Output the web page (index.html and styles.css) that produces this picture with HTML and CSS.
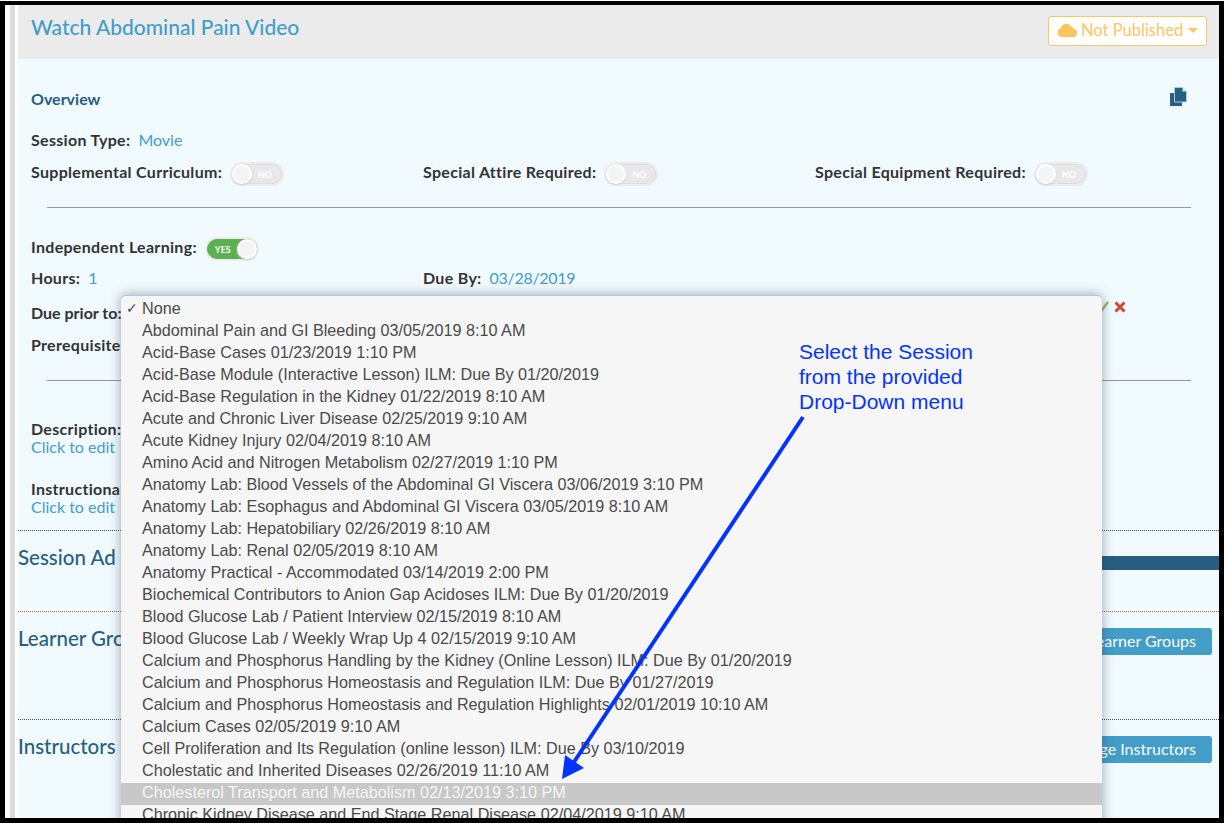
FILE: index.html
```html
<!DOCTYPE html>
<html>

<head>
	<title>Watch Abdominal Pain Video</title>
	<link rel="stylesheet" href="styles.css">
</head>

<body>
	<div class="frame">
		<div class="rail"></div>
		<div class="main">
			<div class="header">
				<h1 class="title">Watch Abdominal Pain Video</h1>
				<button class="publish">
					<svg class="cloud" viewBox="0 0 20 14" width="20" height="14"><path d="M5 14a4.6 4.6 0 0 1-1.2-9 5.6 5.6 0 0 1 10.4-1.2A3 3 0 0 1 16.6 6 4 4 0 0 1 16 14z" /></svg>
					<span>Not Published</span>
					<span class="caret"></span>
				</button>
			</div>
			<div class="panel">
				<div class="row overview">
					<span>Overview</span>
					<svg class="copy" viewBox="0 0 17 19" width="17" height="19">
						<path class="sheet-back" d="M0 6h5v9h7v4H0z" />
						<path class="sheet-front" d="M4.5 0.5h8l4 4v10.500h-12z" />
						<path class="sheet-fold" d="M12.500 0.500l4 4h-4z" />
					</svg>
				</div>
				<div class="row session-type"><span class="label">Session Type:</span><a class="value">Movie</a></div>
				<div class="row columns">
					<div class="col"><span class="label">Supplemental Curriculum:</span><span class="toggle"><span class="knob"></span><span class="toggle-text">NO</span></span></div>
					<div class="col"><span class="label">Special Attire Required:</span><span class="toggle"><span class="knob"></span><span class="toggle-text">NO</span></span></div>
					<div class="col"><span class="label">Special Equipment Required:</span><span class="toggle"><span class="knob"></span><span class="toggle-text">NO</span></span></div>
				</div>
				<hr class="rule rule-one">
				<div class="row independent"><span class="label">Independent Learning:</span><span class="toggle on"><span class="toggle-text">YES</span><span class="knob"></span></span></div>
				<div class="row columns hours">
					<div class="col"><span class="label">Hours:</span><a class="value">1</a></div>
					<div class="col"><span class="label">Due By:</span><a class="value">03/28/2019</a></div>
				</div>
				<div class="row due-prior">
					<span class="label">Due prior to:</span>
					<span class="edit-icons">
						<svg viewBox="0 0 12 12" width="12" height="12" class="ok"><path d="M1 7l3 3 7-9" /></svg>
						<svg viewBox="0 0 12 12" width="12" height="12" class="no"><path d="M1.500 1.500l9 9M10.500 1.500l-9 9" /></svg>
					</span>
				</div>
				<div class="row prereq"><span class="label">Prerequisites:</span></div>
				<hr class="rule rule-two">
				<div class="text-block first"><span class="label">Description:</span><a class="value">Click to edit</a></div>
				<div class="text-block second"><span class="label">Instructional</span><a class="value">Click to edit</a></div>

				<div class="section section-admin">
					<h2>Session Ad</h2>
					<div class="admin-bar"></div>
				</div>
				<div class="section section-learners">
					<h2>Learner Groups</h2>
					<button class="manage">Manage Learner Groups</button>
				</div>
				<div class="section section-instructors">
					<h2>Instructors</h2>
					<button class="manage">Manage Instructors</button>
				</div>
			</div>
		</div>

		<ul class="menu">
			<li class="checked">None</li>
			<li>Abdominal Pain and GI Bleeding 03/05/2019 8:10 AM</li>
			<li>Acid-Base Cases 01/23/2019 1:10 PM</li>
			<li>Acid-Base Module (Interactive Lesson) ILM: Due By 01/20/2019</li>
			<li>Acid-Base Regulation in the Kidney 01/22/2019 8:10 AM</li>
			<li>Acute and Chronic Liver Disease 02/25/2019 9:10 AM</li>
			<li>Acute Kidney Injury 02/04/2019 8:10 AM</li>
			<li>Amino Acid and Nitrogen Metabolism 02/27/2019 1:10 PM</li>
			<li>Anatomy Lab: Blood Vessels of the Abdominal GI Viscera 03/06/2019 3:10 PM</li>
			<li>Anatomy Lab: Esophagus and Abdominal GI Viscera 03/05/2019 8:10 AM</li>
			<li>Anatomy Lab: Hepatobiliary 02/26/2019 8:10 AM</li>
			<li>Anatomy Lab: Renal 02/05/2019 8:10 AM</li>
			<li>Anatomy Practical - Accommodated 03/14/2019 2:00 PM</li>
			<li>Biochemical Contributors to Anion Gap Acidoses ILM: Due By 01/20/2019</li>
			<li>Blood Glucose Lab / Patient Interview 02/15/2019 8:10 AM</li>
			<li>Blood Glucose Lab / Weekly Wrap Up 4 02/15/2019 9:10 AM</li>
			<li>Calcium and Phosphorus Handling by the Kidney (Online Lesson) ILM: Due By 01/20/2019</li>
			<li>Calcium and Phosphorus Homeostasis and Regulation ILM: Due By 01/27/2019</li>
			<li>Calcium and Phosphorus Homeostasis and Regulation Highlights 02/01/2019 10:10 AM</li>
			<li>Calcium Cases 02/05/2019 9:10 AM</li>
			<li>Cell Proliferation and Its Regulation (online lesson) ILM: Due By 03/10/2019</li>
			<li>Cholestatic and Inherited Diseases 02/26/2019 11:10 AM</li>
			<li class="active">Cholesterol Transport and Metabolism 02/13/2019 3:10 PM</li>
			<li>Chronic Kidney Disease and End Stage Renal Disease 02/04/2019 9:10 AM</li>
		</ul>

		<div class="callout">Select the Session<br>from the provided<br>Drop-Down menu</div>
		<svg class="arrow" viewBox="0 0 1227 823" width="1227" height="823">
			<line x1="803" y1="417" x2="574" y2="762" />
			<polygon points="562,779 565,755 584,768" />
		</svg>
	</div>
</body>

</html>
```

FILE: styles.css
```css
* {
	box-sizing: border-box;
}

html,
body {
	margin: 0;
	padding: 0;
	background: #fff;
}

body {
	font-family: "Lato", "Open Sans", sans-serif;
	font-size: 16px;
	color: #333;
}

.frame {
	position: relative;
	display: flex;
	width: 1224px;
	height: 822px;
	margin-top: 1px;
	border: 5px solid #000;
	border-top-width: 4px;
	overflow: hidden;
	background: #fff;
}

.rail {
	flex: none;
	width: 13px;
	border-left: 5px solid #fff;
	border-right: 3px solid #fff;
	background: #dcdcdc;
}

.main {
	flex: 1;
	min-width: 0;
}

.header {
	display: flex;
	justify-content: space-between;
	height: 54px;
	padding: 11px 12px 0 13px;
	background: #ebebeb;
}

.title {
	margin: -1px 0 0;
	font-size: 21px;
	line-height: 24px;
	font-weight: 500;
	color: #429dc9;
	white-space: nowrap;
}

.publish {
	display: flex;
	align-items: center;
	width: 159px;
	height: 30px;
	padding: 0 0 2px 8px;
	border: 1px solid #fcc65e;
	border-radius: 3px;
	background: #fff;
	color: #fcc65e;
	font-family: inherit;
	font-size: 16.500px;
	white-space: nowrap;
}

.cloud {
	flex: none;
	margin-right: 4px;
	fill: #fcc65e;
}

.caret {
	flex: none;
	margin-left: 5px;
	border-left: 5px solid transparent;
	border-right: 5px solid transparent;
	border-top: 5px solid #fcc65e;
}

.panel {
	height: 760px;
	padding-top: 28px;
	background: #f1faff;
}

.row {
	display: flex;
	align-items: center;
	height: 24px;
	padding-left: 13px;
	padding-bottom: 2px;
}

.label {
	font-weight: 700;
	letter-spacing: 0.3px;
	color: #333;
	white-space: nowrap;
}

.value {
	color: #429dc9;
}

.row .value {
	margin-left: 8px;
}

.overview {
	justify-content: space-between;
	padding-right: 31px;
	font-weight: 700;
	color: #265f80;
}

.copy {
	margin: -3px 1px 0 0;
}

.sheet-back,
.sheet-front {
	fill: #265f80;
}

.sheet-front {
	stroke: #a9cbdc;
	stroke-width: 1;
}

.sheet-fold {
	fill: #dcecf4;
}

.session-type {
	margin-top: 17px;
}

.columns {
	margin-top: 8px;
}

.col {
	display: flex;
	align-items: center;
	width: 392px;
}

.toggle {
	display: flex;
	align-items: center;
	justify-content: space-between;
	width: 50px;
	height: 20px;
	margin: 6px 0 0 10px;
	border: 1px solid #dedede;
	border-radius: 10px;
	background: #e8e8e8;
	box-shadow: 0 0 0 2px #ececec;
}

.knob {
	width: 20px;
	height: 20px;
	margin: -1px;
	border-radius: 50%;
	background: #f4f4f4;
	border: 2px solid #fff;
	box-shadow: 0 1px 2px #ccc;
}

.toggle-text {
	margin-right: 9px;
	font-size: 9px;
	font-weight: 700;
	color: #fff;
}

.toggle.on {
	border-color: #5cb04f;
	background: #5cb04f;
}

.toggle.on .toggle-text {
	margin: 0 0 0 7px;
}

.rule {
	height: 1px;
	margin: 23px 28px 0 29px;
	border: 0;
	background: #999;
}

.independent {
	margin-top: 27px;
}

.hours {
	margin-top: 7px;
}

.hours .value {
	letter-spacing: -0.3px;
}

.due-prior {
	justify-content: space-between;
	margin-top: 11px;
	padding-right: 93px;
}

.due-prior .label {
	letter-spacing: 0;
}

.edit-icons {
	display: flex;
	gap: 5px;
	margin-top: -10px;
}

.edit-icons svg {
	fill: none;
}

.ok {
	stroke: #8cc152;
	stroke-width: 2.500;
}

.no {
	stroke: #cf4a2c;
	stroke-width: 3;
}

.prereq {
	margin-top: 8px;
}

.text-block {
	display: flex;
	flex-direction: column;
	padding-left: 13px;
	line-height: 18px;
}

.text-block.first {
	margin-top: 39px;
}

.text-block.second {
	margin-top: 24px;
}

.section {
	display: flex;
	justify-content: space-between;
	border-top: 1px dotted #265f80;
}

.section h2 {
	margin: 0;
	font-size: 20.500px;
	line-height: 27px;
	font-weight: 500;
	color: #265f80;
	white-space: nowrap;
}

.section-admin {
	height: 81px;
	margin-top: 14px;
	padding-top: 13px;
}

.admin-bar {
	width: 400px;
	height: 14px;
	margin-top: 12px;
	background: #265f80;
}

.section-learners {
	height: 108px;
	padding: 16px 7px 0 0;
	border-top-color: #a5673f;
}

.section-instructors {
	padding: 16px 7px 0 0;
}

.section-learners h2,
.section-instructors h2 {
	margin-top: -3px;
}

.manage {
	height: 27px;
	padding: 0 16px 2px;
	border: 0;
	border-radius: 3px;
	background: #429dc9;
	color: #fff;
	font-family: inherit;
	font-size: 16px;
}

.menu {
	position: absolute;
	left: 116px;
	top: 290px;
	width: 981px;
	height: 600px;
	margin: 0;
	padding: 3px 0 0;
	list-style: none;
	border-top: 1px solid #a9c6e4;
	border-radius: 5px 5px 0 0;
	background: #f6f6f6;
	box-shadow: 0 0 12px rgba(40, 60, 70, 0.45);
	font-family: "Liberation Sans", Arial, sans-serif;
	font-size: 16.200px;
	line-height: 18px;
	color: #4a4a4a;
}

.menu li {
	height: 22px;
	padding-left: 21px;
	white-space: nowrap;
}

.menu .checked {
	position: relative;
}

.menu .checked::before {
	content: "\2713";
	position: absolute;
	left: 5px;
	font-size: 14px;
	font-family: "DejaVu Sans", sans-serif;
}

.menu .active {
	background: #c8c8c8;
	color: #f6f6f6;
}

.callout {
	position: absolute;
	left: 794px;
	top: 334px;
	font-family: "Liberation Sans", Arial, sans-serif;
	font-size: 21px;
	line-height: 25px;
	color: #0433ff;
}

.arrow {
	position: absolute;
	left: -5px;
	top: -5px;
	pointer-events: none;
}

.arrow line {
	stroke: #0433ff;
	stroke-width: 4;
}

.arrow polygon {
	fill: #0433ff;
}
```
